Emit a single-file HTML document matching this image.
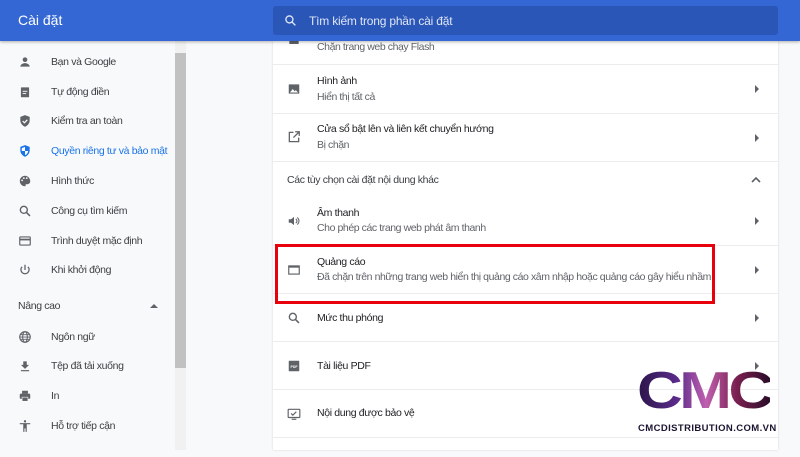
<!DOCTYPE html>
<html><head><meta charset="utf-8"><style>
*{margin:0;padding:0;box-sizing:border-box}
body{width:800px;height:450px;overflow:hidden;background:#f8f9fa;font-family:"Liberation Sans",sans-serif;position:relative;color:#202124;white-space:nowrap}
.hdr{position:absolute;left:0;top:0;width:800px;height:41px;background:#3467d4;box-shadow:0 1px 3px rgba(0,0,0,.3);z-index:5}
.hdr .t{position:absolute;left:18px;top:12px;color:#fff;font-size:14px}
.search{position:absolute;left:273px;top:6px;width:505px;height:29px;background:#2a56b8;border-radius:3px}
.search .p{position:absolute;left:36px;top:8px;color:#dfe6f5;font-size:12px;letter-spacing:-.2px}
.side{position:absolute;left:0;top:41px;width:175px;height:409px}
.sb{position:absolute;left:175px;top:41px;width:11px;height:409px;background:#f1f1f1}
.sb div{position:absolute;left:0;top:12px;width:11px;height:315px;background:#c1c1c1}
.it{position:absolute;left:51px;font-size:10.5px;letter-spacing:-.35px;color:#3c4043}
.ic{position:absolute;left:18px;width:14px;height:14px}
.card{position:absolute;left:273px;top:41px;width:505px;height:409px;background:#fff;box-shadow:0 0 2px rgba(0,0,0,.15)}
.row{position:absolute;left:0;width:505px;border-top:1px solid #ececec}
.ti{position:absolute;left:44px;font-size:10.5px;letter-spacing:-.35px;color:#202124}
.su{position:absolute;left:44px;font-size:10.5px;letter-spacing:-.42px;color:#5f6368}
.ch{position:absolute;left:482px;width:0;height:0;border-top:4px solid transparent;border-bottom:4px solid transparent;border-left:4px solid #5f6368}
.ri{position:absolute;left:14px;width:14px;height:14px}
.red{position:absolute;left:275px;top:244px;width:440px;height:60px;border:3px solid #e8000c}
.logo{position:absolute;left:637px;top:366px;font-size:52px;font-weight:bold;letter-spacing:-3px;font-family:"Liberation Sans",sans-serif;background:linear-gradient(90deg,#2a1548,#5a2a8a 30%,#c060b0 52%,#7a2050 75%,#2a0c28);-webkit-background-clip:text;background-clip:text;color:transparent;line-height:51px;transform:scaleX(1.22);transform-origin:left}
.lt{position:absolute;left:638px;top:423px;font-size:9.5px;font-weight:bold;color:#1b1530;letter-spacing:.4px}
</style></head><body>
<div class="hdr"><div class="t">Cài đặt</div>
<div class="search"><svg style="position:absolute;left:11px;top:8px" width="13" height="13" viewBox="0 0 24 24"><circle cx="10" cy="10" r="6.5" fill="none" stroke="#dfe6f5" stroke-width="2.5"/><path d="M15 15l6 6" stroke="#dfe6f5" stroke-width="2.5"/></svg><div class="p">Tìm kiếm trong phần cài đặt</div></div></div>
<div class="side">
<svg class="ic" style="top:14px" viewBox="0 0 24 24"><circle cx="12" cy="8" r="4" fill="#5f6368"/><path d="M4 20c0-4 5-6 8-6s8 2 8 6z" fill="#5f6368"/></svg><div class="it" style="top:15px">Bạn và Google</div>
<svg class="ic" style="top:44px" viewBox="0 0 24 24"><rect x="5" y="4" width="14" height="17" rx="1" fill="#5f6368"/><rect x="8" y="10" width="8" height="1.5" fill="#fff"/><rect x="8" y="14" width="6" height="1.5" fill="#fff"/></svg><div class="it" style="top:45px">Tự động điền</div>
<svg class="ic" style="top:73px" viewBox="0 0 24 24"><path d="M12 2l8 3v6c0 5-3.5 9-8 11-4.5-2-8-6-8-11V5z" fill="#5f6368"/><path d="M8 12l3 3 5-5" stroke="#fff" stroke-width="2" fill="none"/></svg><div class="it" style="top:74px">Kiểm tra an toàn</div>
<svg class="ic" style="top:103px" viewBox="0 0 24 24"><path d="M12 2l8 3v6c0 5-3.5 9-8 11-4.5-2-8-6-8-11V5z" fill="#1a73e8"/><path d="M12 5v7H6.5V7zM12 12h5.5c-.5 3-2.5 6-5.5 7z" fill="#fff"/></svg><div class="it" style="top:104px;color:#1a73e8">Quyền riêng tư và bảo mật</div>
<svg class="ic" style="top:133px" viewBox="0 0 24 24"><path d="M12 3a9 9 0 000 18c1 0 1.5-.8 1-1.5-.6-.8 0-2 1-2h2a5 5 0 005-5c0-5-4-9.5-9-9.5z" fill="#5f6368"/><circle cx="7" cy="11" r="1.5" fill="#fff"/><circle cx="10" cy="7" r="1.5" fill="#fff"/><circle cx="15" cy="7" r="1.5" fill="#fff"/></svg><div class="it" style="top:134px">Hình thức</div>
<svg class="ic" style="top:163px" viewBox="0 0 24 24"><circle cx="10" cy="10" r="6" fill="none" stroke="#5f6368" stroke-width="2.4"/><path d="M14.5 14.5l6 6" stroke="#5f6368" stroke-width="2.6"/></svg><div class="it" style="top:164px">Công cụ tìm kiếm</div>
<svg class="ic" style="top:193px" viewBox="0 0 24 24"><rect x="3" y="5" width="18" height="14" rx="1" fill="none" stroke="#5f6368" stroke-width="2"/><rect x="3" y="8" width="18" height="3" fill="#5f6368"/></svg><div class="it" style="top:194px">Trình duyệt mặc định</div>
<svg class="ic" style="top:222px" viewBox="0 0 24 24"><path d="M12 3v9" stroke="#5f6368" stroke-width="2.2"/><path d="M7 6.5a7 7 0 1010 0" fill="none" stroke="#5f6368" stroke-width="2.2"/></svg><div class="it" style="top:223px">Khi khởi động</div>
<div class="it" style="left:18px;top:259px">Nâng cao</div>
<div style="position:absolute;left:150px;top:263px;border-left:4px solid transparent;border-right:4px solid transparent;border-bottom:4px solid #5f6368"></div>
<svg class="ic" style="top:289px" viewBox="0 0 24 24"><circle cx="12" cy="12" r="9" fill="none" stroke="#5f6368" stroke-width="2"/><ellipse cx="12" cy="12" rx="4" ry="9" fill="none" stroke="#5f6368" stroke-width="1.8"/><path d="M3 12h18M5 8h14M5 16h14" stroke="#5f6368" stroke-width="1.5"/></svg><div class="it" style="top:290px">Ngôn ngữ</div>
<svg class="ic" style="top:318px" viewBox="0 0 24 24"><path d="M9 4h6v6h4l-7 7-7-7h4z" fill="#5f6368"/><rect x="5" y="19" width="14" height="2" fill="#5f6368"/></svg><div class="it" style="top:319px">Tệp đã tải xuống</div>
<svg class="ic" style="top:348px" viewBox="0 0 24 24"><rect x="7" y="3" width="10" height="5" fill="#5f6368"/><rect x="3" y="8" width="18" height="9" rx="2" fill="#5f6368"/><rect x="7" y="14" width="10" height="7" fill="#5f6368" stroke="#fff"/></svg><div class="it" style="top:349px">In</div>
<svg class="ic" style="top:378px" viewBox="0 0 24 24"><circle cx="12" cy="4" r="2" fill="#5f6368"/><path d="M3 7h18v2h-6v13h-2v-6h-2v6H9V9H3z" fill="#5f6368"/></svg><div class="it" style="top:379px">Hỗ trợ tiếp cận</div>
</div>
<div class="sb"><div></div></div>
<div class="card">
<svg class="ri" style="top:-4px" viewBox="0 0 24 24"><rect x="4" y="4" width="16" height="8" fill="#5f6368"/></svg>
<div class="su" style="top:0px">Chặn trang web chạy Flash</div>
<div class="row" style="top:23px;height:49px"><svg class="ri" style="top:17px" viewBox="0 0 24 24"><rect x="3" y="4" width="18" height="16" rx="1" fill="#5f6368"/><path d="M5 18l5-6 3 4 2-2 4 4z" fill="#fff"/></svg><div class="ti" style="top:10px">Hình ảnh</div><div class="su" style="top:26px">Hiển thị tất cả</div><div class="ch" style="top:20px"></div></div>
<div class="row" style="top:72px;height:48px"><svg class="ri" style="top:16px" viewBox="0 0 24 24"><path d="M11 4H4v16h16v-7" fill="none" stroke="#5f6368" stroke-width="2.2"/><path d="M14 3h7v7M21 3l-10 10" fill="none" stroke="#5f6368" stroke-width="2.2"/></svg><div class="ti" style="top:9px">Cửa sổ bật lên và liên kết chuyển hướng</div><div class="su" style="top:25px">Bị chặn</div><div class="ch" style="top:20px"></div></div>
<div class="row" style="top:120px;height:36px"><div class="ti" style="left:14px;top:12px;color:#3c4043">Các tùy chọn cài đặt nội dung khác</div>
<svg style="position:absolute;left:478px;top:14px" width="10" height="7" viewBox="0 0 10 7"><path d="M1 6l4-4 4 4" fill="none" stroke="#5f6368" stroke-width="1.6"/></svg></div>
<div class="row" style="top:156px;height:48px;border-top:none"><svg class="ri" style="top:17px" viewBox="0 0 24 24"><path d="M3 9h4l5-4v14l-5-4H3z" fill="#5f6368"/><path d="M15 8.5a4 4 0 010 7M17.5 6a7.5 7.5 0 010 12" fill="none" stroke="#5f6368" stroke-width="1.8"/></svg><div class="ti" style="top:10px">Âm thanh</div><div class="su" style="top:25px">Cho phép các trang web phát âm thanh</div><div class="ch" style="top:20px"></div></div>
<div class="row" style="top:204px;height:48px"><svg class="ri" style="top:17px" viewBox="0 0 24 24"><rect x="3" y="5" width="18" height="14" fill="none" stroke="#5f6368" stroke-width="2"/><rect x="3" y="5" width="18" height="3" fill="#5f6368"/></svg><div class="ti" style="top:10px">Quảng cáo</div><div class="su" style="top:25px">Đã chặn trên những trang web hiển thị quảng cáo xâm nhập hoặc quảng cáo gây hiểu nhầm</div><div class="ch" style="top:20px"></div></div>
<div class="row" style="top:252px;height:48px"><svg class="ri" style="top:17px" viewBox="0 0 24 24"><circle cx="10" cy="10" r="6" fill="none" stroke="#5f6368" stroke-width="2.4"/><path d="M14.5 14.5l6 6" stroke="#5f6368" stroke-width="2.6"/></svg><div class="ti" style="top:18px">Mức thu phóng</div><div class="ch" style="top:20px"></div></div>
<div class="row" style="top:300px;height:48px"><svg class="ri" style="top:17px" viewBox="0 0 24 24"><rect x="3" y="3" width="18" height="18" rx="1" fill="#5f6368"/><text x="12" y="15" font-size="6" fill="#fff" text-anchor="middle" font-family="Liberation Sans" font-weight="bold">PDF</text></svg><div class="ti" style="top:18px">Tài liệu PDF</div><div class="ch" style="top:20px"></div></div>
<div class="row" style="top:348px;height:48px"><svg class="ri" style="top:17px" viewBox="0 0 24 24"><rect x="2" y="4" width="20" height="14" rx="1" fill="none" stroke="#5f6368" stroke-width="2"/><path d="M7 11l3 3 6-6" fill="none" stroke="#5f6368" stroke-width="2"/><path d="M8 21h8" stroke="#5f6368" stroke-width="2"/></svg><div class="ti" style="top:17px">Nội dung được bảo vệ</div></div>
<div class="row" style="top:396px;height:20px"></div>
</div>
<div class="red"></div>
<div class="logo">CMC</div>
<div class="lt">CMCDISTRIBUTION.COM.VN</div>
</body></html>
